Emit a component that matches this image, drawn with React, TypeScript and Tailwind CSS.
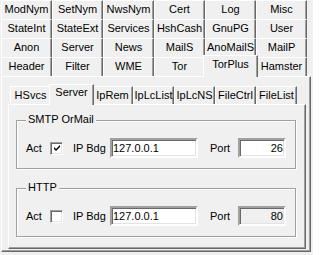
import React from "react";

const rows: string[][] = [
  ["ModNym", "SetNym", "NwsNym", "Cert", "Log", "Misc"],
  ["StateInt", "StateExt", "Services", "HshCash", "GnuPG", "User"],
  ["Anon", "Server", "News", "MailS", "AnoMailS", "MailP"],
];
const lastRow = ["Header", "Filter", "WME", "Tor", "TorPlus", "Hamster"];
const innerTabs = ["HSvcs", "Server", "IpRem", "IpLcList", "IpLcNS", "FileCtrl", "FileList"];

function OuterTab({ label, selected }: { label: string; selected?: boolean }) {
  if (selected) {
    return (
      <div className="relative z-10 -mx-[2px] -mb-[1px] flex h-[22px] w-[55px] shrink-0 justify-center border-l border-r border-t border-white border-r-[#696969] bg-[#f0f0f0] pt-[2px] leading-[13px] shadow-[inset_-1px_0_0_#a0a0a0]">
        {label}
      </div>
    );
  }
  return (
    <div className="flex h-[19px] w-[51px] shrink-0 justify-center border-l border-r border-t border-white border-r-[#696969] bg-[#f0f0f0] pt-[2px] leading-[13px] shadow-[inset_-1px_0_0_#a0a0a0]">
      {label}
    </div>
  );
}

function InnerTab({ label, selected }: { label: string; selected?: boolean }) {
  if (selected) {
    return (
      <div className="relative z-10 -mx-[2px] -mb-[1px] flex h-[21px] w-[45px] shrink-0 justify-center border-l border-r border-t border-white border-r-[#696969] bg-[#f0f0f0] pt-[1px] leading-[13px] shadow-[inset_-1px_0_0_#a0a0a0]">
        {label}
      </div>
    );
  }
  return (
    <div className="flex h-[18px] w-[41px] shrink-0 justify-center border-l border-r border-t border-white border-r-[#696969] bg-[#f0f0f0] pt-[2px] leading-[13px] shadow-[inset_-1px_0_0_#a0a0a0]">
      {label}
    </div>
  );
}

function CheckBox({ checked }: { checked: boolean }) {
  return (
    <div className="flex h-[13px] w-[13px] shrink-0 items-center justify-center border border-b-white border-l-[#a0a0a0] border-r-white border-t-[#a0a0a0] bg-white shadow-[inset_1px_1px_0_#696969,inset_-1px_-1px_0_#e3e3e3]">
      {checked && (
        <svg width="7" height="7" viewBox="0 0 7 7" className="ml-[1px] mt-[1px]">
          <path d="M0 2 L2 4 L6 0 V2 L2 6 L0 4 Z" fill="#000" />
        </svg>
      )}
    </div>
  );
}

function Edit({ value, width, right, disabled }: { value: string; width: string; right?: boolean; disabled?: boolean }) {
  return (
    <div
      className={
        (disabled ? "bg-[#f0f0f0] " : "bg-white ") +
        (right ? "justify-end pr-[1px] " : "justify-start pl-[1px] ") +
        width +
        " flex h-[20px] shrink-0 items-center border-2 border-b-white border-l-[#a0a0a0] border-r-white border-t-[#a0a0a0] leading-[14px] shadow-[inset_1px_1px_0_#696969,inset_-1px_-1px_0_#e3e3e3]"
      }
    >
      {value}
    </div>
  );
}

function Group({ title, checked, port, portDisabled }: { title: string; checked: boolean; port: string; portDisabled?: boolean }) {
  return (
    <div className="relative h-[49px] w-[280px] border border-[#a0a0a0] shadow-[inset_1px_1px_0_#ffffff,1px_1px_0_#ffffff]">
      <div className="absolute -top-[8px] left-[9px] bg-[#f0f0f0] px-[2px] leading-[13px]">{title}</div>
      <div className="mt-[17px] flex h-[20px] items-center pl-[9px]">
        <span className="w-[24px] shrink-0 leading-[13px]">Act</span>
        <CheckBox checked={checked} />
        <span className="ml-[10px] w-[37px] shrink-0 leading-[13px]">IP Bdg</span>
        <Edit value="127.0.0.1" width="w-[88px]" />
        <span className="ml-[12px] w-[28px] shrink-0 leading-[13px]">Port</span>
        <Edit value={port} width="w-[48px]" right disabled={portDisabled} />
      </div>
    </div>
  );
}

export default function App() {
  return (
    <div className="h-[255px] w-[313px] overflow-hidden bg-[#f0f0f0] font-['Liberation_Sans',Arial,sans-serif] text-[11px] text-black">
      <div className="pl-[1px]">
        {rows.map((r, i) => (
          <div key={i} className="flex h-[19px] items-end">
            {r.map((t) => (
              <OuterTab key={t} label={t} />
            ))}
          </div>
        ))}
        <div className="flex h-[19px] items-end">
          {lastRow.map((t) => (
            <OuterTab key={t} label={t} selected={t === "TorPlus"} />
          ))}
        </div>
      </div>
      <div className="ml-[1px] h-[176px] w-[310px] border-b border-l border-r border-t border-white border-b-[#696969] border-r-[#696969] shadow-[inset_-1px_-1px_0_#a0a0a0]">
        <div className="ml-[6px] mt-[7px]">
          <div className="flex h-[20px] items-end pl-[2px]">
            {innerTabs.map((t) => (
              <InnerTab key={t} label={t} selected={t === "Server"} />
            ))}
          </div>
          <div className="h-[145px] w-[298px] border-b border-l border-r border-t border-white border-b-[#696969] border-r-[#696969] shadow-[inset_-1px_-1px_0_#a0a0a0]">
            <div className="ml-[7px] mt-[15px]">
              <Group title="SMTP OrMail" checked={true} port="26" />
              <div className="mt-[19px]">
                <Group title="HTTP" checked={false} port="80" portDisabled />
              </div>
            </div>
          </div>
        </div>
      </div>
    </div>
  );
}
